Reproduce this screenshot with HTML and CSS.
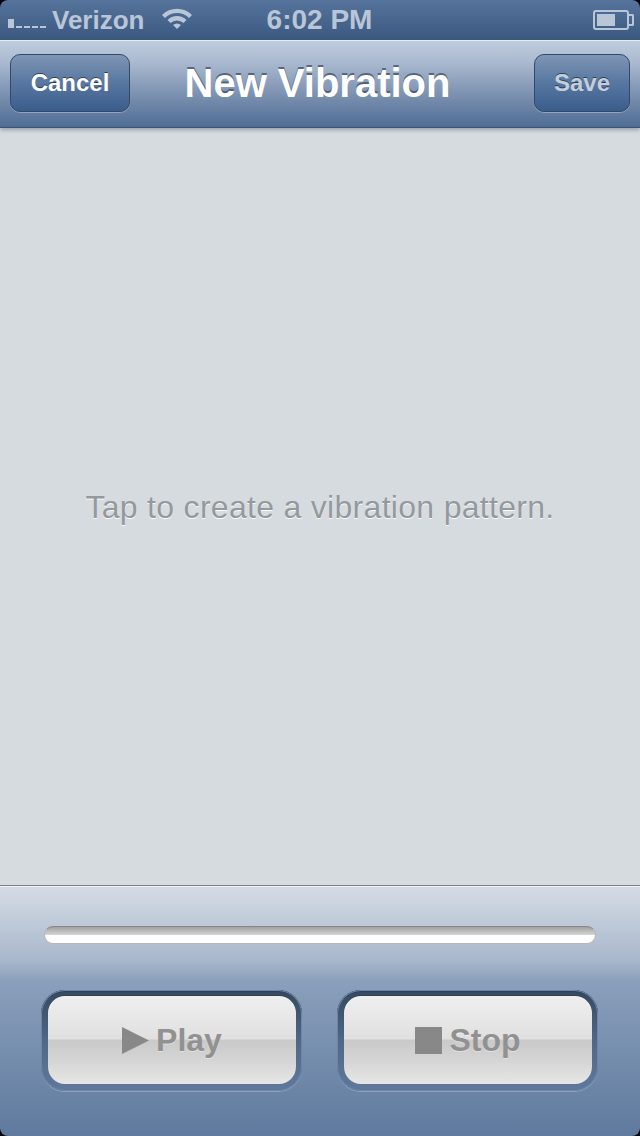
FILE: index.html
```html
<!DOCTYPE html>
<html lang="en">

<head>
    <meta charset="UTF-8">
    <meta name="viewport" content="width=device-width, initial-scale=1.0">
    <title>New Vibration</title>
    <link rel="stylesheet" href="styles.css">
</head>

<body>
    <div id="main">
        <div class="status-bar">
            <div class="status-left">
                <span class="signal"><i class="on"></i><i></i><i></i><i></i><i></i></span>
                <span class="carrier">Verizon</span>
                <svg class="wifi" width="32" height="22" viewBox="0 0 32 22">
                    <path d="M1 8 A21 21 0 0 1 31 8 L28 11 A17 17 0 0 0 4 11 Z" />
                    <path d="M6.500 13 A13.500 13.500 0 0 1 25.500 13 L22.500 16 A9.500 9.500 0 0 0 9.500 16 Z" />
                    <path d="M12 18 A6 6 0 0 1 20 18 L16 22 Z" />
                </svg>
            </div>
            <span class="clock">6:02 PM</span>
            <div class="status-right">
                <div class="battery"><div class="level"></div></div>
                <div class="battery-tip"></div>
            </div>
        </div>

        <div class="nav-bar">
            <button class="nav-btn cancel">Cancel</button>
            <h1 class="title">New Vibration</h1>
            <button class="nav-btn save">Save</button>
        </div>

        <div class="content">
            <p class="hint">Tap to create a vibration pattern.</p>
        </div>

        <div class="panel">
            <div class="track"></div>
            <div class="controls">
                <div class="well">
                    <button class="big-btn">
                        <svg class="play-icon" width="27" height="27" viewBox="0 0 27 27">
                            <path d="M0 0 L27 13.500 L0 27 Z" />
                        </svg>
                        <span>Play</span>
                    </button>
                </div>
                <div class="well">
                    <button class="big-btn">
                        <span class="stop-icon"></span>
                        <span>Stop</span>
                    </button>
                </div>
            </div>
        </div>
    </div>
</body>

</html>
```

FILE: styles.css
```css
html,
body,
h1,
p,
button {
    padding: 0;
    margin: 0;
}

body {
    width: 640px;
    height: 1136px;
    background-color: #000;
    overflow: hidden;
    font-family: "Liberation Sans", Arial, sans-serif;
}

#main {
    width: 640px;
    height: 1136px;
    border-radius: 8px;
    overflow: hidden;
    display: flex;
    flex-direction: column;
}

/* status bar */
.status-bar {
    height: 40px;
    padding: 0 6px 0 8px;
    display: grid;
    grid-template-columns: 1fr auto 1fr;
    align-items: center;
    background: linear-gradient(#56739b, #3b5880);
    color: #b9c6d8;
    font-weight: bold;
    flex: none;
}

.status-left {
    display: flex;
    align-items: center;
}

.signal {
    display: flex;
    align-items: flex-end;
    gap: 2px;
    height: 9px;
    margin-top: 7px;
}

.signal > i {
    width: 6px;
    height: 2px;
    background-color: #b9c6d8;
}

.signal > i.on {
    height: 9px;
}

.carrier {
    font-size: 26px;
    margin-left: 6px;
}

.wifi {
    margin-left: 17px;
    margin-top: -4px;
    fill: #b9c6d8;
}

.clock {
    font-size: 28px;
    margin-left: -3px;
}

.status-right {
    display: flex;
    align-items: center;
    justify-content: flex-end;
}

.battery {
    width: 36px;
    height: 20px;
    box-sizing: border-box;
    border: 2px solid #b9c6d8;
    border-radius: 3px;
    padding: 2px;
}

.level {
    width: 18px;
    height: 100%;
    background-color: #b9c6d8;
}

.battery-tip {
    width: 3px;
    height: 8px;
    border: 2px solid #b9c6d8;
    border-left: none;
    border-radius: 0 2px 2px 0;
}

/* nav */
.nav-bar {
    height: 84px;
    flex: none;
    padding: 0 10px 2px;
    display: grid;
    grid-template-columns: 1fr auto 1fr;
    align-items: center;
    border-top: 1px solid #e6ecf3;
    border-bottom: 1px solid #3c5270;
    background: linear-gradient(#bfccdd, #a9b9cf 25%, #7289aa 70%, #4f6d96);
    box-shadow: 0 2px 4px rgba(60, 70, 90, .4);
    position: relative;
}

.nav-btn {
    height: 58px;
    font-family: inherit;
    font-size: 24px;
    font-weight: bold;
    color: #fff;
    text-shadow: 0 -1px 0 rgba(0, 0, 0, .5);
    border: 1px solid #33496a;
    border-radius: 10px;
    background: linear-gradient(#7f95b3, #5a7aa3 45%, #3b5d8c);
    box-shadow: 0 1px 0 rgba(255, 255, 255, .3);
}

.cancel {
    width: 120px;
    justify-self: start;
}

.save {
    width: 96px;
    justify-self: end;
    color: #c3cedd;
}

.title {
    font-size: 40px;
    font-weight: bold;
    color: #fff;
    text-shadow: 0 -2px 0 rgba(40, 55, 80, .6);
    margin-left: -5px;
}

/* content */
.content {
    flex: 1;
    display: flex;
    align-items: center;
    justify-content: center;
    background-color: #d6dbdf;
}

.hint {
    font-size: 32px;
    letter-spacing: .3px;
    color: #94999e;
    text-shadow: 0 1px 0 #fafbfc;
    margin-top: 2px;
}

/* bottom panel */
.panel {
    height: 251px;
    flex: none;
    box-sizing: border-box;
    padding-top: 40px;
    border-top: 1px solid #7a8288;
    box-shadow: inset 0 1px 0 #eef1f5;
    background: linear-gradient(#d5dce6, #a8b7cb 30%, #8a9fbb 38%, #5f7a9e);
}

.track {
    height: 18px;
    margin: 0 44px;
    box-sizing: border-box;
    border-radius: 9px;
    border: 1px solid #b4b8bc;
    border-top-color: #85888c;
    background: linear-gradient(#a0a0a0, #d4d4d4 48%, #fff 50%, #fff);
}

.controls {
    display: flex;
    justify-content: space-between;
    margin: 46px 42px 0 41px;
}

.well {
    width: 261px;
    height: 101px;
    box-sizing: border-box;
    padding: 6px 6px 7px 7px;
    border-radius: 24px;
    background: linear-gradient(#34495f, #4f6887 50%, #60799b);
    box-shadow: inset 0 0 0 1px #6d86a8, inset 0 2px 0 #2d4059, 0 1px 0 #8ea5c2;
}

.big-btn {
    width: 100%;
    height: 100%;
    display: flex;
    align-items: center;
    justify-content: center;
    gap: 7px;
    font-family: inherit;
    font-size: 32px;
    font-weight: bold;
    color: #919191;
    text-shadow: 0 1px 0 rgba(255, 255, 255, .4);
    border: none;
    border-radius: 17px;
    background: linear-gradient(#efefef, #e0e0e0 49%, #c9c9c9 50%, #d3d3d3 70%, #e6e6e6);
    box-shadow: 0 -1px 0 #2e4058;
}

.play-icon {
    fill: #888;
}

.stop-icon {
    display: block;
    width: 27px;
    height: 27px;
    background-color: #888;
}
```
